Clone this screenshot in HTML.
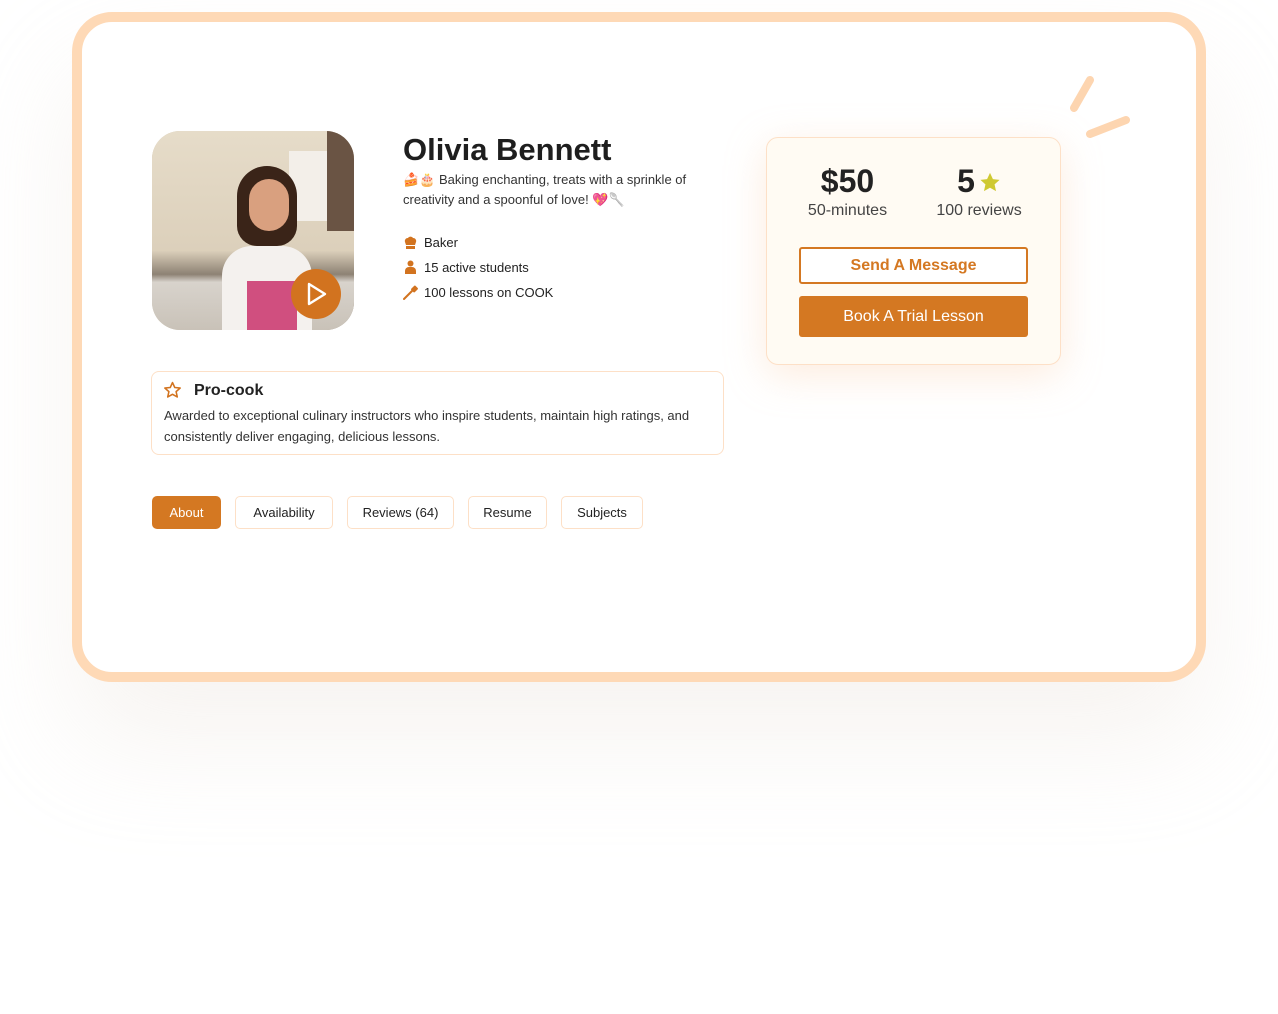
<!DOCTYPE html>
<html><head><style>
*{margin:0;padding:0;box-sizing:border-box}
body{width:1278px;height:1014px;background:#fff;position:relative;overflow:hidden;font-family:"Liberation Sans",sans-serif;color:#222}
.a{position:absolute}
.frame{left:72px;top:12px;width:1134px;height:670px;border:10px solid #fed9b6;border-radius:40px;background:#fff;box-shadow:0 60px 110px rgba(230,220,210,0.3)}
.photo{left:152px;top:131px;width:202px;height:199px;border-radius:28px;overflow:hidden;background:linear-gradient(90deg,#cfc2a8 0%,#e3d8c4 40%,#d9cdb8 70%,#8a7a66 100%)}
.tab{top:496px;height:33px;border:1px solid #fde0c7;border-radius:5px;font-size:13px;line-height:31px;text-align:center;background:#fff;color:#222}
.li{font-size:13px;left:424px}
</style></head><body>
<div class="a frame"></div>
<div class="a photo">
 <div class="a" style="left:0;top:0;width:202px;height:199px;background:linear-gradient(180deg,#e6dcc9 0%,#dcd0bb 60%,#8d8274 72%,#d8d3cc 76%,#c9c2b8 100%)"></div>
 <div class="a" style="left:137px;top:20px;width:60px;height:70px;background:#f3efe9"></div>
 <div class="a" style="left:175px;top:0;width:27px;height:100px;background:#6a5444"></div>
 <div class="a" style="left:85px;top:35px;width:60px;height:80px;border-radius:30px 30px 20px 20px;background:#3a2418"></div>
 <div class="a" style="left:97px;top:48px;width:40px;height:52px;border-radius:20px;background:#d9a07f"></div>
 <div class="a" style="left:70px;top:115px;width:90px;height:90px;border-radius:30px 30px 0 0;background:#f4f1ee"></div>
 <div class="a" style="left:95px;top:150px;width:50px;height:55px;background:#d04f7f"></div>
 <div class="a" style="left:139px;top:138px;width:50px;height:50px;border-radius:50%;background:#d2731f"></div>
 <svg class="a" style="left:154px;top:151px" width="22" height="24" viewBox="0 0 22 24"><path d="M3 2 L19 12 L3 22 Z" fill="none" stroke="#fff" stroke-width="2.4" stroke-linejoin="round"/></svg>
</div>
<div class="a" style="left:403px;top:132px;font-size:31px;font-weight:bold;color:#1e1e1e">Olivia Bennett</div>
<div class="a" style="left:403px;top:170px;width:310px;font-size:13px;line-height:20px;color:#333">🍰🎂 Baking enchanting, treats with a sprinkle of creativity and a spoonful of love! 💖🥄</div>
<svg class="a" style="left:403px;top:236px" width="15" height="14" viewBox="0 0 15 14"><path d="M2 6a3 3 0 0 1 3-4 3 3 0 0 1 5 0 3 3 0 0 1 3 4l-1 3H3z M3 10h9v3H3z" fill="#d2731f"/></svg>
<div class="a li" style="top:235px">Baker</div>
<svg class="a" style="left:404px;top:260px" width="13" height="14" viewBox="0 0 13 14"><circle cx="6.5" cy="3.5" r="3" fill="#d2731f"/><path d="M1 14v-3a4 4 0 0 1 4-4h3a4 4 0 0 1 4 4v3z" fill="#d2731f"/></svg>
<div class="a li" style="top:260px">15 active students</div>
<svg class="a" style="left:403px;top:285px" width="16" height="15" viewBox="0 0 16 15"><path d="M1 14L9 6" stroke="#d2731f" stroke-width="2" stroke-linecap="round"/><rect x="9" y="1" width="5" height="6" rx="1" transform="rotate(45 11.5 4)" fill="#d2731f"/></svg>
<div class="a li" style="top:285px">100 lessons on COOK</div>

<div class="a" style="left:151px;top:371px;width:573px;height:84px;border:1px solid #fde0c7;border-radius:8px"></div>
<svg class="a" style="left:163px;top:381px" width="19" height="18" viewBox="0 0 24 23"><path d="M12 2l2.9 6.3 6.9.7-5.2 4.6 1.5 6.8L12 17l-6.1 3.4 1.5-6.8L2.2 9l6.9-.7z" fill="none" stroke="#d2731f" stroke-width="2" stroke-linejoin="round"/></svg>
<div class="a" style="left:194px;top:382px;font-size:16px;font-weight:bold;color:#222">Pro-cook</div>
<div class="a" style="left:164px;top:405px;width:556px;font-size:13px;line-height:21px;color:#333">Awarded to exceptional culinary instructors who inspire students, maintain high ratings, and consistently deliver engaging, delicious lessons.</div>

<div class="a tab" style="left:152px;width:69px;background:#d47822;border-color:#d47822;color:#fff">About</div>
<div class="a tab" style="left:235px;width:98px">Availability</div>
<div class="a tab" style="left:347px;width:107px">Reviews (64)</div>
<div class="a tab" style="left:468px;width:79px">Resume</div>
<div class="a tab" style="left:561px;width:82px">Subjects</div>

<div class="a" style="left:766px;top:137px;width:295px;height:228px;background:#fffbf3;border:1px solid #fde0c7;border-radius:12px;box-shadow:0 10px 40px rgba(250,200,160,0.35)"></div>
<div class="a" style="left:790px;top:163px;width:115px;text-align:center;font-size:32px;font-weight:bold;color:#222">$50</div>
<div class="a" style="left:790px;top:202px;width:115px;text-align:center;font-size:16px;color:#444">50-minutes</div>
<div class="a" style="left:920px;top:163px;width:118px;text-align:center;font-size:32px;font-weight:bold;color:#222">5<span style="display:inline-block;width:26px"></span></div>
<svg class="a" style="left:979px;top:172px" width="22" height="21" viewBox="0 0 24 23"><path d="M12 1l3.2 6.8 7.3.8-5.5 5 1.6 7.3L12 17.2 5.4 20.9 7 13.6l-5.5-5 7.3-.8z" fill="#cfc932"/></svg>
<div class="a" style="left:920px;top:202px;width:118px;text-align:center;font-size:16px;color:#444">100 reviews</div>
<div class="a" style="left:799px;top:247px;width:229px;height:37px;border:2px solid #d47822;border-radius:3px;background:#fff;color:#d47822;font-size:16px;font-weight:bold;text-align:center;line-height:34px">Send A Message</div>
<div class="a" style="left:799px;top:296px;width:229px;height:41px;border-radius:3px;background:#d47822;color:#fff;font-size:16px;text-align:center;line-height:42px">Book A Trial Lesson</div>
<svg class="a" style="left:1060px;top:70px" width="80" height="75" viewBox="0 0 80 75"><path d="M30 10L14 38M30 64L66 50" stroke="#fdd5b0" stroke-width="8" stroke-linecap="round"/></svg>
</body></html>
